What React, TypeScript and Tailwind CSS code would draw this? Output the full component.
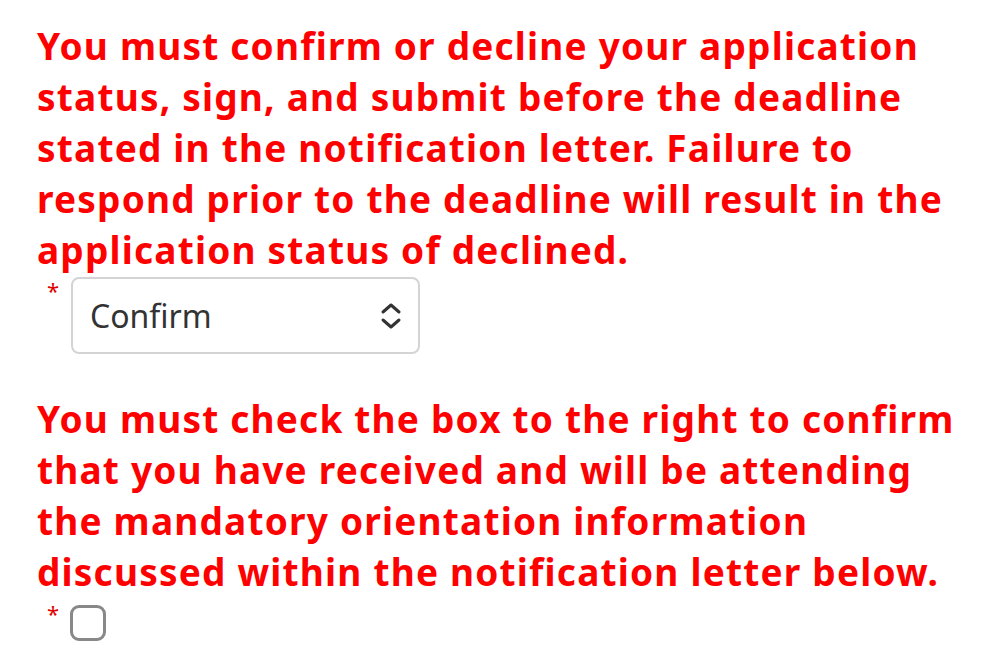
import React from "react";

function RequiredMark() {
  return <span className="text-[22px] leading-none text-[#e00000] pt-[2px] w-[12px]">*</span>;
}

export default function App() {
  return (
    <div className="bg-white min-h-[671px] pl-[37px] pr-[40px] pt-[20px]" style={{ fontFamily: "'Noto Sans', sans-serif" }}>
      <p className="text-[37px] leading-[51px] font-bold tracking-[1.2px] text-[#ff0000]">
        You must confirm or decline your application status, sign, and submit before the deadline stated in the notification letter. Failure to respond prior to the deadline will result in the application status of declined.
      </p>
      <div className="flex items-start mt-[2px] pl-[10px]">
        <RequiredMark />
        <div className="ml-[12px] w-[349px] h-[77px] border-2 border-[#d4d4d4] rounded-[8px] flex items-center justify-between pl-[17px] pr-[15px]">
          <span className="text-[32px] text-[#333]">Confirm</span>
          <svg width="24" height="28" viewBox="0 0 24 28" fill="none" stroke="#333" strokeWidth="3" strokeLinecap="round" strokeLinejoin="round">
            <path d="M4 10l8-7 8 7" />
            <path d="M4 18l8 7 8-7" />
          </svg>
        </div>
      </div>
      <p className="mt-[39px] text-[37px] leading-[51px] font-bold tracking-[1.2px] text-[#ff0000]">
        You must check the box to the right to confirm that you have received and will be attending the mandatory orientation information discussed within the notification letter below.
      </p>
      <div className="flex items-start mt-[3px] pl-[10px]">
        <RequiredMark />
        <div className="ml-[11px] mt-[5px] w-[36px] h-[36px] border-[3px] border-[#888] rounded-[9px]" />
      </div>
    </div>
  );
}
